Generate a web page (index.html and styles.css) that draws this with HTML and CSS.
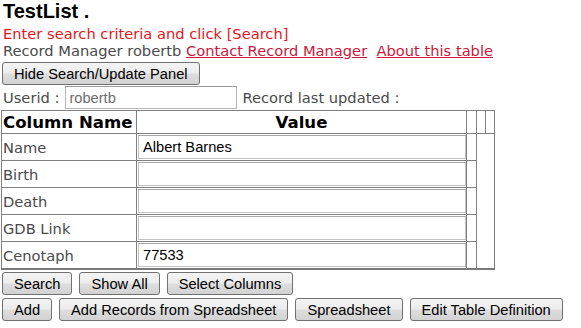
FILE: index.html
```html
<!DOCTYPE html>
<html lang="en">
<head>
    <meta charset="UTF-8">
    <title>TestList</title>
    <link rel="stylesheet" href="styles.css">
</head>
<body>
    <h1 class="title">TestList .</h1>
    <div class="prompt">Enter search criteria and click [Search]</div>
    <div class="manager">
        Record Manager robertb <a href="#">Contact Record Manager</a>&nbsp; <a href="#">About this table</a>
    </div>

    <div class="panel-toggle">
        <button class="btn">Hide Search/Update Panel</button>
    </div>

    <div class="userid-row">
        <span class="label">Userid :</span>
        <input type="text" class="userid-input" value="robertb" readonly>
        <span class="label">Record last updated :</span>
    </div>

    <table class="record-table">
        <thead>
            <tr>
                <th class="col-name">Column Name</th>
                <th class="col-value">Value</th>
                <th class="col-x1"></th>
                <th class="col-x2"></th>
                <th class="col-x3"></th>
            </tr>
        </thead>
        <tbody>
            <tr>
                <td class="field">Name</td>
                <td><input type="text" class="value-input" value="Albert Barnes"></td>
                <td></td>
            </tr>
            <tr>
                <td class="field">Birth</td>
                <td><input type="text" class="value-input" value=""></td>
                <td></td>
            </tr>
            <tr>
                <td class="field">Death</td>
                <td><input type="text" class="value-input" value=""></td>
                <td></td>
            </tr>
            <tr>
                <td class="field">GDB Link</td>
                <td><input type="text" class="value-input" value=""></td>
                <td></td>
            </tr>
            <tr>
                <td class="field">Cenotaph</td>
                <td><input type="text" class="value-input" value="77533"></td>
                <td></td>
            </tr>
        </tbody>
    </table>

    <div class="button-row first">
        <button class="btn">Search</button>
        <button class="btn">Show All</button>
        <button class="btn">Select Columns</button>
    </div>
    <div class="button-row">
        <button class="btn">Add</button>
        <button class="btn">Add Records from Spreadsheet</button>
        <button class="btn">Spreadsheet</button>
        <button class="btn">Edit Table Definition</button>
    </div>
</body>
</html>
```

FILE: styles.css
```css
body {
    margin: 0;
    padding: 0 2px;
    background-color: #fff;
    font-family: "DejaVu Sans", Verdana, sans-serif;
    font-size: 14.67px;
    color: #4a4a4a;
}

.title {
    margin: 0 0 0 1px;
    font-family: "Liberation Sans", Arial, sans-serif;
    font-size: 20px;
    line-height: 22px;
    font-weight: bold;
    color: #000;
}

.prompt {
    margin-top: 3px;
    line-height: 17px;
    padding-left: 1px;
    color: #e3151c;
}

.manager {
    line-height: 17px;
    padding-left: 1px;
}

.manager a {
    color: #c8193c;
}

.panel-toggle {
    margin-top: 3px;
}

.btn {
    font-family: "Liberation Sans", Arial, sans-serif;
    font-size: 14.67px;
    color: #000;
    height: 23px;
    padding: 0 11px;
    border: 1px solid #707070;
    border-radius: 3px;
    background: linear-gradient(#f4f4f4 0%, #ececec 48%, #dedede 52%, #d2d2d2 100%);
    cursor: pointer;
    margin: 0;
    white-space: nowrap;
}

.userid-row {
    display: flex;
    align-items: center;
    gap: 5px;
    margin-top: 1px;
    padding-left: 1px;
}

.userid-input {
    width: 172px;
    height: 23px;
    box-sizing: border-box;
    margin: 0 0 0 1px;
    padding: 0 3px;
    border: 1px solid #b5b5b5;
    border-top-color: #9c9c9c;
    font-family: "Liberation Sans", Arial, sans-serif;
    font-size: 14.67px;
    color: #6d6d6d;
}

.record-table {
    margin: 1px 0 0 -1px;
    border-collapse: collapse;
    table-layout: fixed;
    width: 494px;
    border: 1px solid #7a7a7a;
    border-bottom-width: 2px;
}

.record-table th,
.record-table td {
    border: 1px solid #808080;
    padding: 0 1px;
}

.record-table th {
    height: 22px;
    font-size: 16.6px;
    font-weight: bold;
    color: #000;
    white-space: nowrap;
}

.record-table .col-name {
    width: 132px;
    text-align: left;
    overflow: hidden;
}

.record-table .col-value {
    width: 327px;
}

.record-table .col-x1 {
    width: 7px;
}

.record-table .col-x2,
.record-table .col-x3 {
    width: 6px;
}

.record-table td {
    height: 26px;
}

.value-input {
    display: block;
    width: 328px;
    height: 24px;
    box-sizing: border-box;
    margin: 0;
    padding: 0 4px;
    border: 1px solid #c2c2c2;
    border-top-color: #a8a8a8;
    font-family: "Liberation Sans", Arial, sans-serif;
    font-size: 14.67px;
    color: #000;
}

.button-row {
    display: flex;
    gap: 7px;
    margin-top: 3px;
}

.button-row.first {
    margin-top: 2px;
}
```
